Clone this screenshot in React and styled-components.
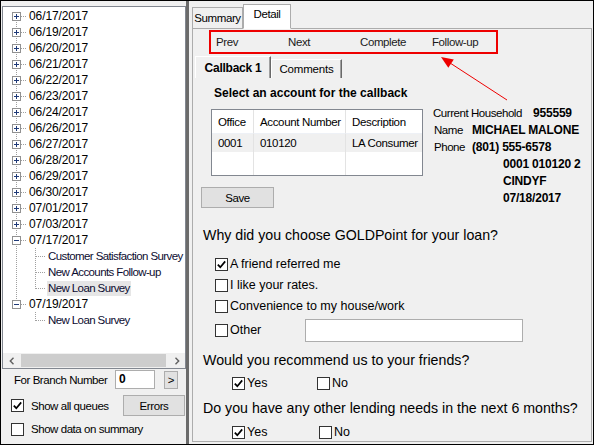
import React from 'react';
import styled, { createGlobalStyle } from 'styled-components';

const GlobalStyle = createGlobalStyle`
  html, body { margin: 0; padding: 0; background: #fff; }
  body { font-family: "Liberation Sans", Arial, sans-serif; }
  * { box-sizing: border-box; }
`;

const Window = styled.div`
  position: relative;
  width: 594px;
  height: 445px;
  border: 1px solid #000;
  background: #f0f0f0;
  display: flex;
  overflow: hidden;
  color: #000;
  font-size: 11px;
  letter-spacing: -0.3px;
`;

/* ---------- left side ---------- */

const LeftPanel = styled.div`
  width: 185px;
  flex: none;
  padding: 5px 0 0 1px;
  display: flex;
  flex-direction: column;
`;

const TreeBox = styled.div`
  width: 184px;
  height: 363px;
  flex: none;
  border: 1px solid #828790;
  background: #fff;
  display: flex;
  flex-direction: column;
`;

const TreeList = styled.div`
  flex: 1;
  padding-top: 1px;
  overflow: hidden;
`;

const TreeRow = styled.div`
  display: flex;
  align-items: center;
  height: 16px;
  white-space: nowrap;
`;

const NodeLabel = styled.span`
  margin-left: ${p => (p.$child ? '0' : '1px')};
  padding: 0 1px;
  line-height: 15px;
  font-size: ${p => (p.$child ? '11.5px' : '12px')};
  letter-spacing: ${p => (p.$child ? '-0.6px' : '-0.1px')};
  color: ${p => (p.$child ? '#0c0c30' : '#000')};
  background: ${p => (p.$selected ? '#e6e6e6' : 'transparent')};
`;

const HScroll = styled.div`
  height: 15px;
  flex: none;
  display: flex;
  background: #f0f0f0;
`;

const ScrollArrow = styled.div`
  width: 17px;
  flex: none;
  display: flex;
  align-items: center;
  justify-content: center;
`;

const ScrollThumb = styled.div`
  width: 145px;
  flex: none;
  margin: 1px 0 1px 1px;
  background: #cdcdcd;
`;

const ScrollGap = styled.div`
  flex: 1;
`;

const ControlRow = styled.div`
  display: flex;
  align-items: center;
  height: ${p => p.$h}px;
  margin-top: ${p => p.$mt}px;
  padding-left: ${p => p.$pl}px;
  font-size: 11.5px;
  letter-spacing: -0.45px;
`;

const BranchLabel = styled.span`
  width: 101px;
  flex: none;
`;

const NumberInput = styled.div`
  width: 40px;
  height: 19px;
  border: 1px solid #adadad;
  background: #fff;
  padding-left: 3px;
  font-weight: bold;
  font-size: 12px;
  line-height: 17px;
`;

const Button = styled.div`
  width: ${p => p.$w}px;
  height: ${p => p.$h}px;
  flex: none;
  margin-left: ${p => p.$ml || '0'};
  margin-right: ${p => p.$mr || 0}px;
  margin-top: ${p => p.$mt || 0}px;
  border: 1px solid #adadad;
  background: #e1e1e1;
  display: flex;
  align-items: center;
  justify-content: center;
  font-size: 11.5px;
  letter-spacing: -0.4px;
`;

const CheckLabel = styled.span`
  margin-left: ${p => p.$ml}px;
  white-space: nowrap;
`;

const Splitter = styled.div`
  width: 3px;
  flex: none;
  background: #6b6b6b;
`;

/* ---------- right side ---------- */

const RightPanel = styled.div`
  flex: 1;
  min-width: 0;
  display: flex;
  flex-direction: column;
  padding: 0 1px 2px 3px;
`;

const TabStrip = styled.div`
  height: 28px;
  flex: none;
  display: flex;
  align-items: flex-end;
`;

const TopTab = styled.div`
  width: ${p => p.$w}px;
  height: ${p => (p.$active ? 25 : 22)}px;
  flex: none;
  border: 1px solid #acacac;
  border-bottom: ${p => (p.$active ? '1px solid transparent' : '1px solid #acacac')};
  background: ${p => (p.$active ? '#fff' : '#f0f0f0')};
  display: flex;
  justify-content: center;
  padding-top: ${p => (p.$active ? 3 : 4)}px;
  font-size: 11.5px;
  letter-spacing: -0.4px;
`;

const StripRest = styled.div`
  flex: 1;
  height: 1px;
  border-bottom: 1px solid #acacac;
`;

const TabPage = styled.div`
  flex: 1;
  min-height: 0;
  border: 1px solid #acacac;
  border-top: none;
  display: flex;
  flex-direction: column;
`;

const Toolbar = styled.div`
  width: 289px;
  height: 24px;
  flex: none;
  margin: 1px 0 0 16px;
  border: 2px solid #ee0000;
  display: flex;
  align-items: center;
  padding-left: 5px;
  font-size: 11.5px;
  letter-spacing: -0.4px;
  color: #1a1a1a;
`;

const ToolItem = styled.span`
  width: 72px;
  flex: none;
`;

const InnerTabs = styled.div`
  height: 22px;
  flex: none;
  margin-top: 2px;
  padding-left: 2px;
  display: flex;
  align-items: flex-end;
`;

const InnerTab = styled.div`
  width: ${p => p.$w}px;
  height: ${p => (p.$active ? 22 : 19)}px;
  flex: none;
  border-top: 1px solid #fff;
  border-left: 1px solid #fff;
  border-right: 1px solid #696969;
  box-shadow: inset -1px 0 0 #a0a0a0;
  display: flex;
  align-items: center;
  justify-content: center;
  font-size: ${p => (p.$active ? '12px' : '11.5px')};
  font-weight: ${p => (p.$active ? 'bold' : 'normal')};
  letter-spacing: ${p => (p.$active ? '-0.25px' : '-0.2px')};
`;

const CallbackPage = styled.div`
  flex: 1;
  padding-left: 8px;
  display: flex;
  flex-direction: column;
`;

const TopSection = styled.div`
  display: flex;
`;

const LeftCol = styled.div`
  width: 232px;
  flex: none;
  display: flex;
  flex-direction: column;
  align-items: flex-start;
`;

const Heading = styled.div`
  margin: 8px 0 0 13px;
  font-size: 12px;
  line-height: 14px;
  font-weight: bold;
  letter-spacing: 0;
  white-space: nowrap;
`;

const Table = styled.div`
  width: 212px;
  height: 67px;
  margin: 9px 0 0 10px;
  border: 1px solid #828790;
  background: #fff;
  display: grid;
  grid-template-columns: 42px 92px 1fr;
  grid-template-rows: 24px 18px 1fr;
`;

const Cell = styled.div`
  display: flex;
  align-items: center;
  padding-left: 6px;
  border-right: ${p => (p.$last ? 'none' : '1px solid #e3e3e3')};
  border-bottom: ${p => (p.$head ? '1px solid #eef1f6' : 'none')};
  background: ${p => (p.$shade ? '#f0f0f0' : '#fff')};
  font-size: 11.5px;
  letter-spacing: -0.35px;
  white-space: nowrap;
  overflow: hidden;
`;

const InfoCol = styled.div`
  padding-top: 26px;
  display: flex;
  flex-direction: column;
`;

const InfoRow = styled.div`
  display: flex;
  align-items: center;
  height: 17px;
  padding-left: ${p => p.$pl || 0}px;
  white-space: nowrap;
`;

const InfoLabel = styled.span`
  width: ${p => p.$w}px;
  flex: none;
  font-size: 11.5px;
  letter-spacing: -0.45px;
`;

const InfoValue = styled.span`
  font-size: 12px;
  font-weight: bold;
  letter-spacing: -0.2px;
`;

const Question = styled.div`
  margin-top: ${p => p.$mt}px;
  padding-left: 2px;
  font-size: 14.2px;
  line-height: 18px;
  letter-spacing: 0;
  white-space: nowrap;
`;

const Options = styled.div`
  margin: 10px 0 0 14px;
  display: flex;
  flex-direction: column;
  gap: 1px;
`;

const OptionRow = styled.div`
  display: flex;
  align-items: center;
  height: ${p => (p.$tall ? 22 : 20)}px;
  margin-top: ${p => (p.$tall ? 2 : 0)}px;
  font-size: 12.5px;
  letter-spacing: 0;
`;

const OptionText = styled.span`
  margin-left: 2px;
  width: ${p => (p.$w ? `${p.$w}px` : 'auto')};
  flex: none;
`;

const TextBox = styled.div`
  width: 218px;
  height: 23px;
  border: 1px solid #adadad;
  background: #fff;
`;

const YesNoRow = styled.div`
  display: flex;
  align-items: center;
  height: 20px;
  margin: ${p => p.$mt}px 0 0 31px;
  font-size: 12.5px;
  letter-spacing: 0;
`;

const YesNoItem = styled.div`
  display: flex;
  align-items: center;
  width: ${p => p.$w}px;
  flex: none;
`;

const Box = styled.span`
  width: 13px;
  height: 13px;
  flex: none;
  border: 1px solid #333;
  background: #fff;
  display: flex;
  align-items: center;
  justify-content: center;
`;

const Arrow = styled.svg`
  position: absolute;
  left: 437px;
  top: 53px;
`;

/* ---------- small drawings ---------- */

const CheckBox = ({ checked }) => (
  <Box>
    {checked && (
      <svg width="11" height="11" viewBox="0 0 11 11">
        <path d="M1.8 5.6 L4.3 8.2 L9.2 2.4" fill="none" stroke="#000" strokeWidth="1.7" />
      </svg>
    )}
  </Box>
);

const dot = { stroke: '#a0a0a0', strokeWidth: 1, strokeDasharray: '1 1', shapeRendering: 'crispEdges' };

const RootGutter = ({ first, last, expanded }) => (
  <svg width="24" height="16" viewBox="0 0 24 16" style={{ flex: 'none' }}>
    <line x1="13.5" y1={first ? 8 : 0} x2="13.5" y2={last ? 8 : 16} {...dot} />
    <line x1="18" y1="8.5" x2="24" y2="8.5" {...dot} />
    <rect x="9.5" y="4.5" width="8" height="8" fill="#fff" stroke="#919191" shapeRendering="crispEdges" />
    <line x1="11" y1="8.5" x2="16" y2="8.5" stroke="#1f3a78" shapeRendering="crispEdges" />
    {!expanded && <line x1="13.5" y1="6" x2="13.5" y2="11" stroke="#1f3a78" shapeRendering="crispEdges" />}
  </svg>
);

const ChildGutter = ({ lastChild, rootLine }) => (
  <svg width="44" height="16" viewBox="0 0 44 16" style={{ flex: 'none' }}>
    {rootLine && <line x1="13.5" y1="0" x2="13.5" y2="16" {...dot} />}
    <line x1="32.5" y1="0" x2="32.5" y2={lastChild ? 9 : 16} {...dot} />
    <line x1="33" y1="8.5" x2="43" y2="8.5" {...dot} />
  </svg>
);

const Chevron = ({ dir }) => (
  <svg width="6" height="8" viewBox="0 0 6 8">
    <path d={dir === 'left' ? 'M4.5 0.8 L1.3 4 L4.5 7.2' : 'M1.5 0.8 L4.7 4 L1.5 7.2'} fill="none" stroke="#606060" strokeWidth="1.4" />
  </svg>
);

const collapsed = [
  '06/17/2017', '06/19/2017', '06/20/2017', '06/21/2017', '06/22/2017', '06/23/2017', '06/24/2017',
  '06/26/2017', '06/27/2017', '06/28/2017', '06/29/2017', '06/30/2017', '07/01/2017', '07/03/2017',
];

const Tree = () => (
  <TreeBox>
    <TreeList>
      {collapsed.map((d, i) => (
        <TreeRow key={d}>
          <RootGutter first={i === 0} />
          <NodeLabel>{d}</NodeLabel>
        </TreeRow>
      ))}
      <TreeRow>
        <RootGutter expanded />
        <NodeLabel>07/17/2017</NodeLabel>
      </TreeRow>
      <TreeRow>
        <ChildGutter rootLine />
        <NodeLabel $child>Customer Satisfaction Survey</NodeLabel>
      </TreeRow>
      <TreeRow>
        <ChildGutter rootLine />
        <NodeLabel $child>New Accounts Follow-up</NodeLabel>
      </TreeRow>
      <TreeRow>
        <ChildGutter rootLine lastChild />
        <NodeLabel $child $selected>New Loan Survey</NodeLabel>
      </TreeRow>
      <TreeRow>
        <RootGutter expanded last />
        <NodeLabel>07/19/2017</NodeLabel>
      </TreeRow>
      <TreeRow>
        <ChildGutter lastChild />
        <NodeLabel $child>New Loan Survey</NodeLabel>
      </TreeRow>
    </TreeList>
    <HScroll>
      <ScrollArrow><Chevron dir="left" /></ScrollArrow>
      <ScrollThumb />
      <ScrollGap />
      <ScrollArrow><Chevron dir="right" /></ScrollArrow>
    </HScroll>
  </TreeBox>
);

const YesNo = ({ mt, w }) => (
  <YesNoRow $mt={mt}>
    <YesNoItem $w={w}>
      <CheckBox checked />
      <OptionText>Yes</OptionText>
    </YesNoItem>
    <YesNoItem>
      <CheckBox />
      <OptionText>No</OptionText>
    </YesNoItem>
  </YesNoRow>
);

export default function App() {
  return (
    <>
      <GlobalStyle />
      <Window>
        <LeftPanel>
          <Tree />
          <ControlRow $h={19} $mt={1} $pl={12}>
            <BranchLabel>For Branch Number</BranchLabel>
            <NumberInput>0</NumberInput>
            <Button $w={14} $h={18} $ml="9px">&gt;</Button>
          </ControlRow>
          <ControlRow $h={21} $mt={6} $pl={9}>
            <CheckBox checked />
            <CheckLabel $ml={7}>Show all queues</CheckLabel>
            <Button $w={62} $h={21} $ml="auto" $mr={1}>Errors</Button>
          </ControlRow>
          <ControlRow $h={14} $mt={6} $pl={9}>
            <CheckBox />
            <CheckLabel $ml={7}>Show data on summary</CheckLabel>
          </ControlRow>
        </LeftPanel>

        <Splitter />

        <RightPanel>
          <TabStrip>
            <TopTab $w={51}>Summary</TopTab>
            <TopTab $w={48} $active>Detail</TopTab>
            <StripRest />
          </TabStrip>
          <TabPage>
            <Toolbar>
              <ToolItem>Prev</ToolItem>
              <ToolItem>Next</ToolItem>
              <ToolItem>Complete</ToolItem>
              <ToolItem>Follow-up</ToolItem>
            </Toolbar>
            <InnerTabs>
              <InnerTab $w={76} $active>Callback 1</InnerTab>
              <InnerTab $w={71}>Comments</InnerTab>
            </InnerTabs>
            <CallbackPage>
              <TopSection>
                <LeftCol>
                  <Heading>Select an account for the callback</Heading>
                  <Table>
                    <Cell $head>Office</Cell>
                    <Cell $head>Account Number</Cell>
                    <Cell $head $last>Description</Cell>
                    <Cell $shade>0001</Cell>
                    <Cell $shade>010120</Cell>
                    <Cell $shade $last>LA Consumer</Cell>
                    <Cell />
                    <Cell />
                    <Cell $last />
                  </Table>
                  <Button $w={73} $h={21} $mt={11}>Save</Button>
                </LeftCol>
                <InfoCol>
                  <InfoRow>
                    <InfoLabel $w={100}>Current Household</InfoLabel>
                    <InfoValue>955559</InfoValue>
                  </InfoRow>
                  <InfoRow $pl={1}>
                    <InfoLabel $w={38}>Name</InfoLabel>
                    <InfoValue>MICHAEL MALONE</InfoValue>
                  </InfoRow>
                  <InfoRow $pl={1}>
                    <InfoLabel $w={38}>Phone</InfoLabel>
                    <InfoValue>(801) 555-6578</InfoValue>
                  </InfoRow>
                  <InfoRow $pl={70}><InfoValue>0001 010120 2</InfoValue></InfoRow>
                  <InfoRow $pl={70}><InfoValue>CINDYF</InfoValue></InfoRow>
                  <InfoRow $pl={70}><InfoValue>07/18/2017</InfoValue></InfoRow>
                </InfoCol>
              </TopSection>

              <Question $mt={18}>Why did you choose GOLDPoint for your loan?</Question>
              <Options>
                <OptionRow>
                  <CheckBox checked />
                  <OptionText>A friend referred me</OptionText>
                </OptionRow>
                <OptionRow>
                  <CheckBox />
                  <OptionText>I like your rates.</OptionText>
                </OptionRow>
                <OptionRow>
                  <CheckBox />
                  <OptionText>Convenience to my house/work</OptionText>
                </OptionRow>
                <OptionRow $tall>
                  <CheckBox />
                  <OptionText $w={75}>Other</OptionText>
                  <TextBox />
                </OptionRow>
              </Options>

              <Question $mt={10}>Would you recommend us to your friends?</Question>
              <YesNo mt={4} w={85} />
              <Question $mt={6}>Do you have any other lending needs in the next 6 months?</Question>
              <YesNo mt={5} w={87} />
            </CallbackPage>
          </TabPage>
        </RightPanel>

        <Arrow width="74" height="50" viewBox="0 0 74 50">
          <line x1="69" y1="46" x2="9" y2="7" stroke="#ee0000" strokeWidth="1" />
          <polygon points="3,3 15.8,5.4 10.3,13.7" fill="#ee0000" />
        </Arrow>
      </Window>
    </>
  );
}
